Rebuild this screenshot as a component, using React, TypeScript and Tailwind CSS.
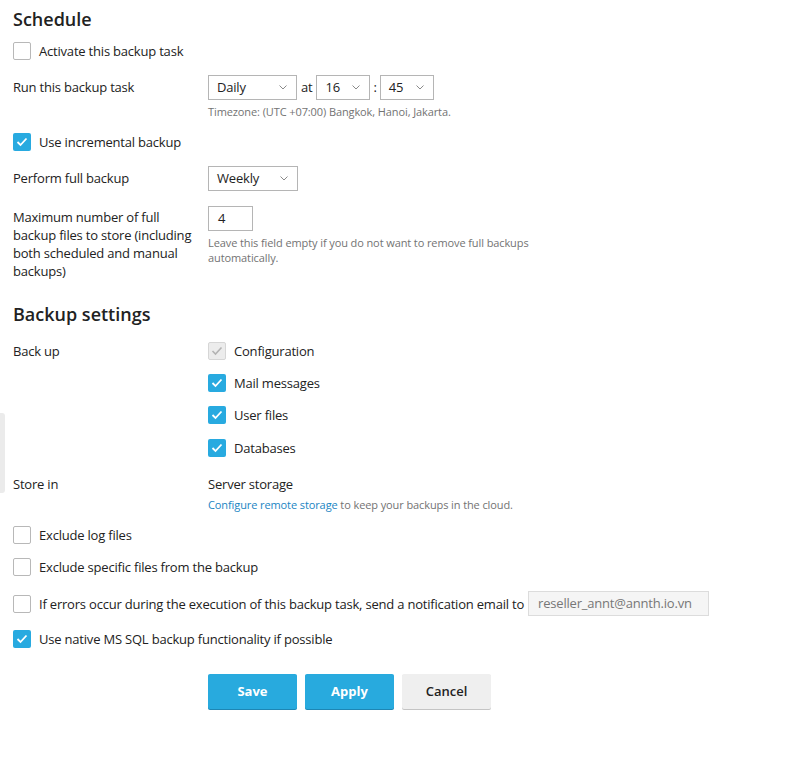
import type { ReactNode } from 'react'

// Backup task settings form (schedule + backup content)

function Chevron() {
  return (
    <svg width="8" height="5" viewBox="0 0 8 5" className="shrink-0">
      <path d="M0.5 0.5 L4 4 L7.5 0.5" fill="none" stroke="#8a8a8a" strokeWidth="1" />
    </svg>
  )
}

function Select({ value, width }: { value: string; width: string }) {
  return (
    <div
      className={`${width} h-[25px] flex items-center justify-between pl-[8px] pr-[9px] border border-[#b5b5b5] bg-white text-[13px] text-[#222]`}
    >
      <span>{value}</span>
      <Chevron />
    </div>
  )
}

function Checkbox({ checked = false, disabled = false }: { checked?: boolean; disabled?: boolean }) {
  if (disabled) {
    return (
      <span className="w-[18px] h-[18px] shrink-0 flex items-center justify-center rounded-[2px] border border-[#d6d6d6] bg-[#ececec]">
        <svg width="12" height="10" viewBox="0 0 12 10">
          <path d="M1.5 5 L4.5 8 L10.5 1.5" fill="none" stroke="#b3b3b3" strokeWidth="1.6" />
        </svg>
      </span>
    )
  }
  if (checked) {
    return (
      <span className="w-[18px] h-[18px] shrink-0 flex items-center justify-center rounded-[2px] bg-[#28aae0]">
        <svg width="12" height="10" viewBox="0 0 12 10">
          <path d="M1.5 5 L4.5 8 L10.5 1.5" fill="none" stroke="#fff" strokeWidth="1.8" />
        </svg>
      </span>
    )
  }
  return <span className="w-[18px] h-[18px] shrink-0 rounded-[2px] border border-[#b8b8b8] bg-white" />
}

function CheckRow({ checked, disabled, children, className = '' }: { checked?: boolean; disabled?: boolean; children: ReactNode; className?: string }) {
  return (
    <div className={`flex items-center gap-[8px] ${className}`}>
      <Checkbox checked={checked} disabled={disabled} />
      <span className="leading-[18px]">{children}</span>
    </div>
  )
}

export default function App() {
  return (
    <div
      className="relative min-h-[771px] bg-white px-[13px] pt-[7px] text-[13px] tracking-[-0.2px] text-[#222]"
      style={{ fontFamily: '"Open Sans", "Noto Sans", sans-serif' }}
    >
      <div className="absolute left-0 top-[413px] w-[5px] h-[80px] rounded-r-[3px] bg-[#ebebeb]" />

      <h2 className="text-[18px] leading-[24px] font-semibold tracking-normal">Schedule</h2>

      <CheckRow className="mt-[11px]">Activate this backup task</CheckRow>

      <div className="flex mt-[15px]">
        <div className="w-[195px] shrink-0 pt-[3px] leading-[18px]">Run this backup task</div>
        <div>
          <div className="flex items-center">
            <Select value="Daily" width="w-[89px]" />
            <span className="mx-[4px]">at</span>
            <Select value="16" width="w-[54px]" />
            <span className="mx-[3px]">:</span>
            <Select value="45" width="w-[54px]" />
          </div>
          <div className="mt-[4px] text-[11px] leading-[16px] tracking-[-0.1px] text-[#737373]">
            Timezone: (UTC +07:00) Bangkok, Hanoi, Jakarta.
          </div>
        </div>
      </div>

      <CheckRow checked className="mt-[13px]">Use incremental backup</CheckRow>

      <div className="flex mt-[15px]">
        <div className="w-[195px] shrink-0 pt-[3px] leading-[18px]">Perform full backup</div>
        <Select value="Weekly" width="w-[90px]" />
      </div>

      <div className="flex mt-[15px]">
        <div className="w-[195px] shrink-0 pt-[2px] pr-[6px] leading-[18px]">
          Maximum number of full backup files to store (including both scheduled and manual backups)
        </div>
        <div>
          <div className="w-[45px] h-[25px] flex items-center px-[9px] border border-[#b5b5b5]">4</div>
          <div className="mt-[4px] w-[330px] text-[11px] leading-[15px] tracking-[-0.1px] text-[#737373]">
            Leave this field empty if you do not want to remove full backups automatically.
          </div>
        </div>
      </div>

      <h2 className="mt-[22px] text-[18px] leading-[24px] font-semibold tracking-normal">Backup settings</h2>

      <div className="flex mt-[16px]">
        <div className="w-[195px] shrink-0 leading-[18px]">Back up</div>
        <div className="flex flex-col gap-[14px]">
          <CheckRow disabled className="gap-[7px]">Configuration</CheckRow>
          <CheckRow checked className="gap-[7px]">Mail messages</CheckRow>
          <CheckRow checked className="gap-[7px]">User files</CheckRow>
          <CheckRow checked className="gap-[7px] mt-[1px]">Databases</CheckRow>
        </div>
      </div>

      <div className="flex mt-[18px]">
        <div className="w-[195px] shrink-0 leading-[18px]">Store in</div>
        <div>
          <div className="leading-[18px]">Server storage</div>
          <div className="mt-[4px] text-[11px] leading-[15px] tracking-[-0.1px] text-[#737373]">
            <a className="text-[#1a85c3]">Configure remote storage</a> to keep your backups in the cloud.
          </div>
        </div>
      </div>

      <CheckRow className="mt-[14px]">Exclude log files</CheckRow>
      <CheckRow className="mt-[14px]">Exclude specific files from the backup</CheckRow>

      <div className="flex items-center gap-[8px] mt-[15px]">
        <Checkbox />
        <span className="leading-[18px]">
          If errors occur during the execution of this backup task, send a notification email to
        </span>
        <div className="ml-[-4px] w-[181px] h-[25px] flex items-center px-[9px] border border-[#dcdcdc] bg-[#f5f5f5] text-[#777]">
          reseller_annt@annth.io.vn
        </div>
      </div>

      <CheckRow checked className="mt-[14px]">Use native MS SQL backup functionality if possible</CheckRow>

      <div className="flex gap-[8px] ml-[195px] mt-[26px] tracking-normal">
        <button className="w-[89px] h-[35px] rounded-[2px] bg-[#28aade] text-white font-bold shadow-[0_1px_0_#1d86b4]">
          Save
        </button>
        <button className="w-[89px] h-[35px] rounded-[2px] bg-[#28aade] text-white font-bold shadow-[0_1px_0_#1d86b4]">
          Apply
        </button>
        <button className="w-[89px] h-[35px] rounded-[2px] bg-[#efefef] text-[#222] font-semibold shadow-[0_1px_0_#c4c4c4]">
          Cancel
        </button>
      </div>
    </div>
  )
}
